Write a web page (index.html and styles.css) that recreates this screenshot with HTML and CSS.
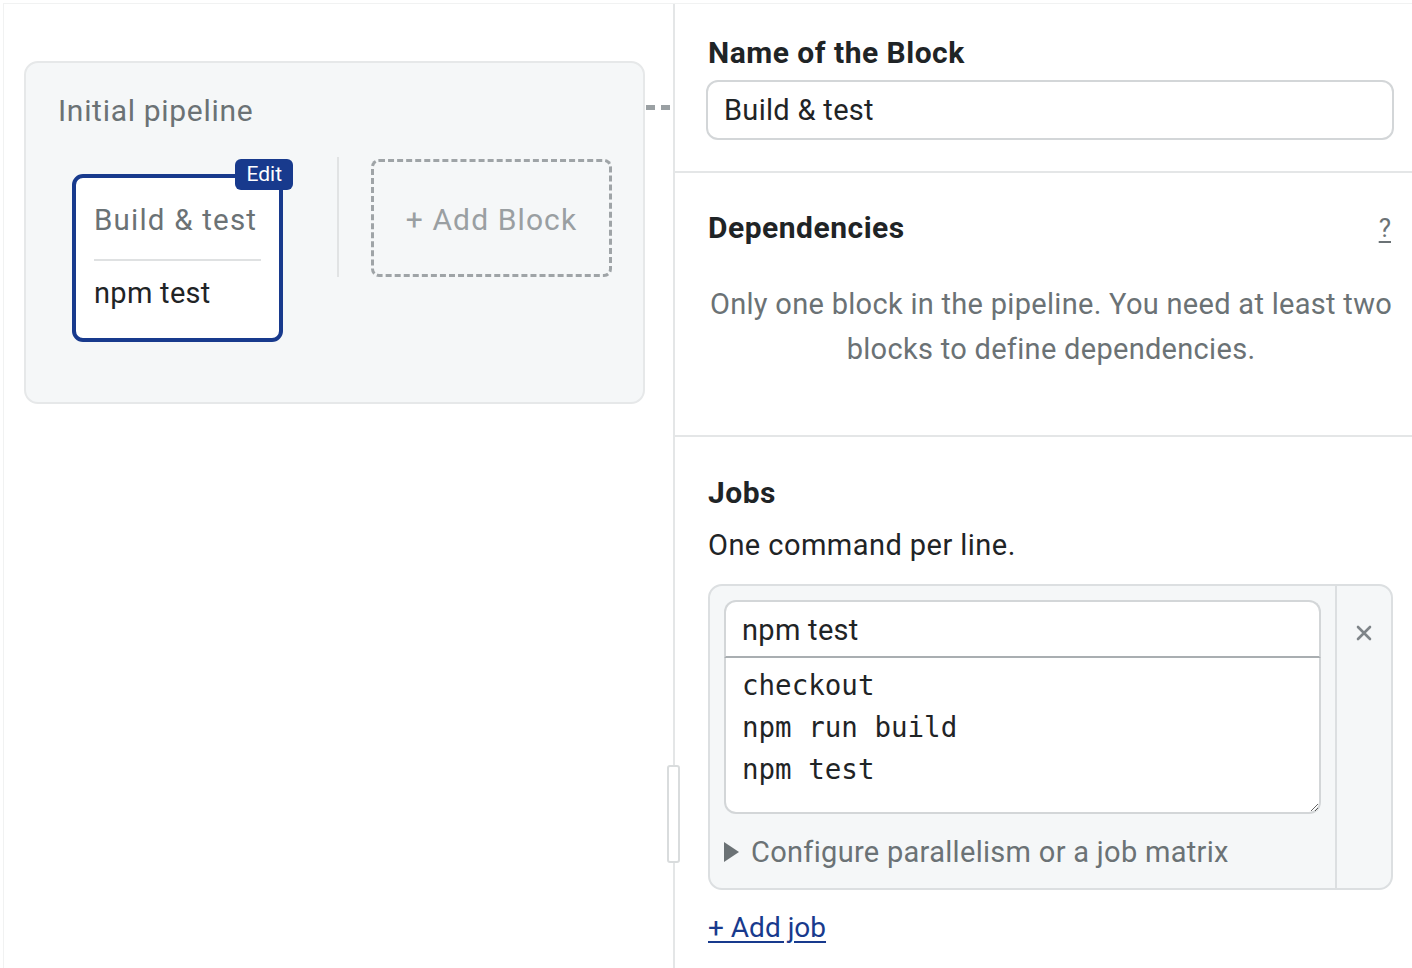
FILE: index.html
```html
<!DOCTYPE html>
<html lang="en">
<head>
<meta charset="utf-8">
<title>Workflow editor</title>
<link rel="stylesheet" href="styles.css">
</head>
<body>
<div class="app">
  <div class="canvas">
    <div class="pipeline-row">
      <div class="pipeline">
        <div class="pipeline-title">Initial pipeline</div>
        <div class="blocks">
          <div class="block">
            <span class="edit-badge">Edit</span>
            <div class="block-name">Build &amp; test</div>
            <div class="block-job">npm test</div>
          </div>
          <div class="block-sep"></div>
          <div class="add-block">+ Add Block</div>
        </div>
      </div>
      <div class="connector"><span></span><span></span></div>
    </div>
  </div>
  <div class="editor">
    <div class="resize-handle"></div>
    <section class="section">
      <div class="label">Name of the Block</div>
      <div class="text-input">Build &amp; test</div>
    </section>
    <section class="section deps">
      <div class="label-row">
        <div class="label">Dependencies</div>
        <span class="help">?</span>
      </div>
      <p class="deps-note">Only one block in the pipeline. You need at least two blocks to define dependencies.</p>
    </section>
    <section class="section jobs">
      <div class="label">Jobs</div>
      <div class="hint">One command per line.</div>
      <div class="job">
        <div class="job-main">
          <div class="job-name">npm test</div>
          <textarea class="job-cmds" spellcheck="false">checkout
npm run build
npm test</textarea>
          <div class="job-config"><span class="tri"></span>Configure parallelism or a job matrix</div>
        </div>
        <div class="job-side">
          <svg class="close" width="18" height="18" viewBox="0 0 18 18"><path d="M3 3L15 15M15 3L3 15" stroke="#7f8589" stroke-width="2.6" stroke-linecap="round"/></svg>
        </div>
      </div>
      <a class="add-job" href="#">+ Add job</a>
    </section>
  </div>
</div>
</body>
</html>
```

FILE: styles.css
```css
* { box-sizing: border-box; }
html, body { margin: 0; padding: 0; background: #fff; }
body {
  font-family: Roboto, "Liberation Sans", sans-serif;
  color: #1f2426;
}
.app {
  margin: 3px 0 0 3px;
  border-top: 1px solid #f1f2f2;
  border-left: 1px solid #f1f2f2;
  height: 965px;
  display: grid;
  grid-template-columns: 669px 1fr;
  overflow: hidden;
}
.canvas {
  padding: 57px 0 0 20px;
}
.pipeline-row {
  display: flex;
  align-items: flex-start;
}
.pipeline {
  width: 621px;
  height: 343px;
  background: #f5f7f8;
  border: 2px solid #e6e8e9;
  border-radius: 14px;
  padding: 28px 0 0 0;
}
.pipeline-title {
  margin-left: 32px;
  font-size: 30px;
  letter-spacing: 0.7px;
  line-height: 40px;
  color: #6b7275;
}
.blocks {
  display: flex;
  align-items: flex-start;
  margin-top: 26px;
  margin-left: 46px;
}
.block {
  position: relative;
  width: 211px;
  height: 168px;
  margin-top: 17px;
  background: #fff;
  border: 4px solid #183a8d;
  border-radius: 11px;
  padding: 0 18px;
}
.edit-badge {
  position: absolute;
  top: -19px;
  right: -14px;
  height: 31px;
  padding: 0 11px;
  background: #183a8d;
  color: #fff;
  font-size: 21px;
  line-height: 31px;
  border-radius: 6px;
}
.block-name {
  font-size: 29.5px;
  letter-spacing: 1.2px;
  line-height: 38px;
  padding-top: 23px;
  padding-bottom: 20px;
  color: #6b7275;
  border-bottom: 2px solid #dfe1e2;
}
.block-job {
  font-size: 29px;
  letter-spacing: 0.3px;
  line-height: 38px;
  padding-top: 13px;
  color: #1f2426;
}
.block-sep {
  width: 2px;
  height: 120px;
  background: #e1e3e4;
  margin: 0 32px 0 54px;
}
.add-block {
  width: 241px;
  height: 118px;
  margin-top: 2px;
  border: 3px dashed #9fa4a7;
  border-radius: 8px;
  display: flex;
  align-items: center;
  justify-content: center;
  font-size: 30px;
  letter-spacing: 1.1px;
  color: #9a9fa2;
  padding-top: 3px;
}
.connector {
  display: flex;
  gap: 6px;
  margin-top: 44px;
  margin-left: 1px;
}
.connector span {
  display: block;
  width: 9px;
  height: 5px;
  background: #9aa0a3;
}

.editor {
  position: relative;
  border-left: 2px solid #e4e6e7;
}
.resize-handle {
  position: absolute;
  left: -8px;
  top: 761px;
  width: 13px;
  height: 98px;
  background: #fff;
  border: 2px solid #d9dcdd;
  border-radius: 3px;
}
.section {
  padding: 32px 18px 31px 33px;
  border-bottom: 2px solid #e4e6e7;
}
.label {
  font-size: 30px;
  letter-spacing: 0.5px;
  font-weight: 700;
  line-height: 34px;
  color: #1f2426;
}
.text-input {
  margin-top: 10px;
  height: 60px;
  margin-left: -2px;
  border: 2px solid #d3d6d8;
  border-radius: 12px;
  padding: 0 16px;
  font-size: 29px;
  letter-spacing: 0.3px;
  line-height: 56px;
}
.deps { padding-top: 38px; padding-bottom: 63px; }
.label-row {
  display: flex;
  justify-content: space-between;
  align-items: center;
}
.help {
  font-size: 26px;
  font-weight: 400;
  color: #6b7275;
  text-decoration: underline;
  text-underline-offset: 4px;
  margin-right: 3px;
}
.deps-note {
  margin: 37px 0 0 0;
  text-align: center;
  font-size: 29px;
  letter-spacing: 0.3px;
  line-height: 45px;
  color: #6b7275;
}
.jobs { border-bottom: none; padding-top: 39px; }
.hint {
  margin-top: 18px;
  font-size: 29px;
  letter-spacing: 0.45px;
  line-height: 34px;
}
.job {
  margin-top: 22px;
  width: 685px;
  height: 306px;
  display: flex;
  background: #f5f7f8;
  border: 2px solid #dcdfe1;
  border-radius: 14px;
}
.job-main {
  flex: 1;
  padding: 14px 14px 0 14px;
}
.job-name {
  height: 58px;
  background: #fff;
  border: 2px solid #d3d6d8;
  border-bottom: 2px solid #a9aeb1;
  border-radius: 12px 12px 0 0;
  padding: 0 16px;
  font-size: 29px;
  letter-spacing: 0.3px;
  line-height: 56px;
}
.job-cmds {
  display: block;
  width: 100%;
  height: 156px;
  margin: 0;
  border: 2px solid #d3d6d8;
  border-top: none;
  border-radius: 0 0 12px 12px;
  padding: 6px 16px 0 16px;
  font-family: "DejaVu Sans Mono", "Liberation Mono", monospace;
  font-size: 27.5px;
  line-height: 42px;
  color: #1f2426;
  background: #fff;
  resize: vertical;
  outline: none;
  overflow: hidden;
}
.job-config {
  display: flex;
  align-items: center;
  margin-top: 19px;
  font-size: 29px;
  letter-spacing: 0.3px;
  line-height: 38px;
  color: #6b7275;
}
.tri {
  width: 0;
  height: 0;
  border-left: 15px solid #6b7275;
  border-top: 10px solid transparent;
  border-bottom: 10px solid transparent;
  margin-right: 12px;
}
.job-side {
  width: 56px;
  border-left: 2px solid #dcdfe1;
  display: flex;
  justify-content: center;
  padding-top: 38px;
}
.close { display: block; }
.add-job {
  display: inline-block;
  margin-top: 21px;
  font-size: 28px;
  line-height: 34px;
  color: #183a8d;
  text-decoration: underline;
  text-underline-offset: 4px;
}
```
